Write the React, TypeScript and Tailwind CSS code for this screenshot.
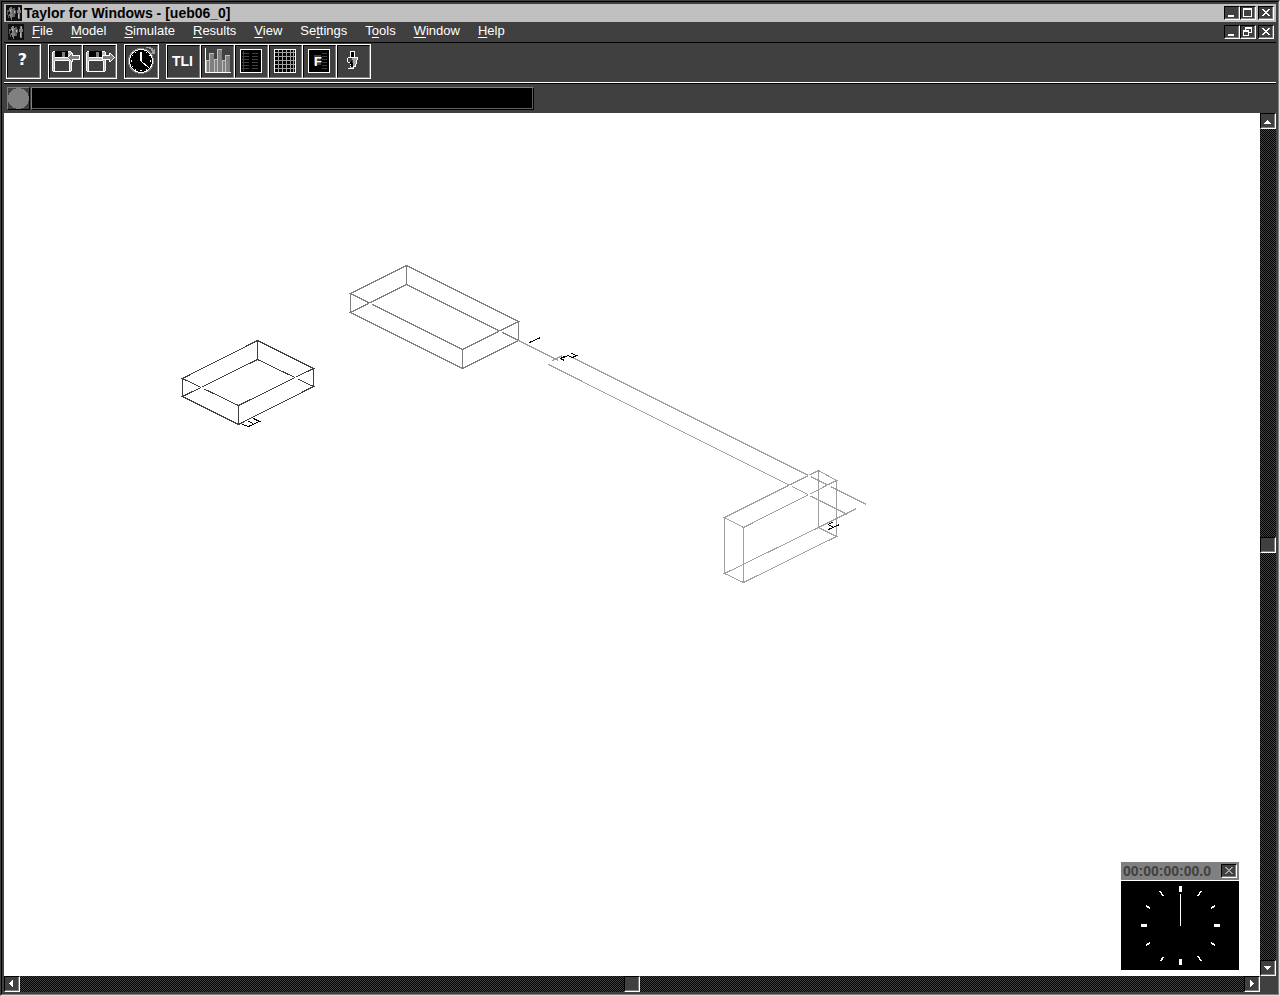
import type { ReactNode } from "react";

const DARK = "#404040";
const MID = "#808080";

const raised =
  "border-t border-l border-t-black border-l-black border-r border-b border-r-white border-b-white";

function AppIcon() {
  return (
    <svg width="16" height="16" viewBox="0 0 16 16" shapeRendering="crispEdges" aria-hidden="true" className="shrink-0">
      <rect width="16" height="16" fill="#101010" />
      <path d="M4 2h2v2h1v3h-1v2h1v3h-1v3h-1v-2h-1v-2h-1v-2h1v-3h-1v-3h1z" fill={MID} />
      <path d="M1 5h2v2h-1v3h-1zM7 3h2v2h1v4h-1v3h-2v-3h-1v-4h1zM2 10h1v3h-1z" fill="#606060" />
      <path d="M4 5h1v2h-1zM8 6h1v2h-1z" fill="#c0c0c0" />
      <path d="M12 2h2v3h1v3h-1v6h-2v-6h-1v-3h1z" fill={MID} />
      <path d="M13 3h1v2h-1zM12 9h1v4h-1z" fill="#c0c0c0" />
    </svg>
  );
}

type Glyph = "min" | "max" | "restore" | "close";

function WindowButton({ glyph, label, muted }: { glyph: Glyph; label: string; muted?: boolean }) {
  const color = muted ? "#a0a0a0" : "#fff";
  return (
    <button type="button" aria-label={label} className={`h-3.5 w-4 shrink-0 bg-[#404040] ${raised}`}>
      <span className="block h-3 w-3.5 border-r border-b border-[#808080]">
        <svg width="13" height="11" viewBox="0 0 13 11" shapeRendering="crispEdges" aria-hidden="true">
          {glyph === "min" && <rect x="3" y="8" width="6" height="2" fill={color} />}
          {glyph === "max" && <path d="M2 1h9v9h-9zM3 3v6h7v-6z" fill={color} fillRule="evenodd" />}
          {glyph === "restore" && (
            <path
              d="M4 1h7v6h-3v3h-6v-6h2zM5 3v1h3v2h2v-3zM3 6v3h4v-3z"
              fill={color}
              fillRule="evenodd"
            />
          )}
          {glyph === "close" && (
            <path
              d="M3 2h2v1h1v1h2v-1h1v-1h2v1h-1v1h-1v1h-1v1h1v1h1v1h1v1h-2v-1h-1v-1h-2v1h-1v1h-2v-1h1v-1h1v-1h1v-1h-1v-1h-1v-1h-1z"
              fill={color}
            />
          )}
        </svg>
      </span>
    </button>
  );
}

function ToolButton({ label, children }: { label: string; children: ReactNode }) {
  return (
    <button
      type="button"
      aria-label={label}
      className="-ml-px size-[35px] shrink-0 border border-white bg-[#404040] text-white first:ml-0"
    >
      <span className="flex size-[33px] items-center justify-center border border-t-black border-r-[#808080] border-b-[#808080] border-l-black">
        {children}
      </span>
    </button>
  );
}

function ToolSvg({ children }: { children: ReactNode }) {
  return (
    <svg width="31" height="31" viewBox="2 2 31 31" shapeRendering="crispEdges" aria-hidden="true">
      {children}
    </svg>
  );
}

function Floppy() {
  return (
    <>
      <path d="M5 7h18v1h1v19h-1v1h-18v-1h-1v-19h1z" fill="#fff" />
      <path d="M5 8h18v19h-18z" fill="#c0c0c0" />
      <rect x="7" y="7" width="13" height="6" fill="#000" />
      <rect x="14" y="8" width="3" height="5" fill={MID} />
      <path d="M7 13h13v1h-13zM7 16h14v1h-14z" fill="#fff" />
      <rect x="7" y="17" width="14" height="10" fill={DARK} />
      <path d="M6 17h1v10h-1zM21 17h1v10h-1z" fill="#fff" />
    </>
  );
}

function OpenIcon() {
  return (
    <ToolSvg>
      <Floppy />
      <path d="M19 13h1v-1h1v-1h1v-1h1v-1h2v2h7v5h-7v2h-2v-1h-1v-1h-1v-1h-1v-1h-1z" fill="#fff" />
      <path d="M20 13h1v-1h1v-1h1v-1h1v2h7v3h-7v2h-1v-1h-1v-1h-1v-1h-1z" fill={MID} />
    </ToolSvg>
  );
}

function SaveIcon() {
  return (
    <ToolSvg>
      <Floppy />
      <path d="M20 11h7v-2h2v1h1v1h1v1h1v1h1v1h-1v1h-1v1h-1v1h-1v1h-2v-2h-7z" fill="#fff" />
      <path d="M21 12h7v-2h1v1h1v1h1v1h1v1h-1v1h-1v1h-1v1h-1v-2h-7z" fill={MID} />
    </ToolSvg>
  );
}

function ClockIcon() {
  return (
    <ToolSvg>
      <circle cx="17" cy="17" r="13" fill={MID} />
      <circle cx="17" cy="17" r="12" fill="#fff" />
      <circle cx="17" cy="17" r="11" fill="#000" />
      <path
        d="M16 8h2v9h-2zM16 26h2v1h-2zM7 16h1v2h-1zM26 16h1v2h-1zM11 8h1v1h-1zM22 8h1v1h-1zM8 11h1v1h-1zM25 11h1v1h-1zM8 22h1v1h-1zM11 25h1v1h-1zM22 25h1v1h-1z"
        fill="#fff"
      />
      <path d="M17 17l8 7" stroke="#fff" fill="none" />
      <path d="M22 3h5v1h2v2h1v-1h1v5h-5v-1h2v-2h-1v-2h-2v-1h-3z" fill="#a0a0a0" />
    </ToolSvg>
  );
}

const bars = [
  [6, 16, 3],
  [9, 9, 5],
  [14, 15, 3],
  [17, 5, 5],
  [22, 16, 3],
  [25, 11, 5],
];

function ChartIcon() {
  return (
    <ToolSvg>
      {bars.map(([x, y, w]) => (
        <g key={x}>
          <rect x={x} y={y} width={w} height={28 - y} fill="#c0c0c0" />
          <rect x={x + 1} y={y + 1} width={w - 1} height={27 - y} fill={MID} />
        </g>
      ))}
      <path d="M5 4h1v24h25v1h-26z" fill="#fff" />
    </ToolSvg>
  );
}

const rows = [9, 12, 15, 18, 21, 24];

function Frame() {
  return (
    <>
      <rect x="6" y="5" width="22" height="24" fill="#fff" />
      <rect x="7" y="6" width="20" height="22" fill="#000" />
    </>
  );
}

function TableIcon() {
  return (
    <ToolSvg>
      <Frame />
      <rect x="9" y="7" width="1" height="20" fill={DARK} />
      {rows.map((y) => (
        <path key={y} d={`M8 ${y}h7v1h-7zM18 ${y}h6v1h-6z`} fill={DARK} />
      ))}
    </ToolSvg>
  );
}

function GridIcon() {
  return (
    <ToolSvg>
      <Frame />
      {[10, 14, 18, 22, 25].map((x) => (
        <rect key={x} x={x} y="6" width="1" height="22" fill="#a0a0a0" />
      ))}
      {[8, 12, 16, 20, 24].map((y) => (
        <rect key={y} x="7" y={y} width="20" height="1" fill="#a0a0a0" />
      ))}
    </ToolSvg>
  );
}

function FormIcon() {
  return (
    <ToolSvg>
      <Frame />
      <rect x="12" y="11" width="7" height="10" fill={DARK} />
      {rows.map((y) => (
        <rect key={y} x="20" y={y} width="5" height="1" fill={DARK} />
      ))}
      <text x="12" y="22" fontSize="13" fontWeight="700" fill="#fff" fontFamily="Liberation Sans, sans-serif">
        F
      </text>
    </ToolSvg>
  );
}

function HandIcon() {
  return (
    <ToolSvg>
      <path d="M14 7h5v6h3v3h-1v4h-1v3h-2v2h-6v-1h2v-2h1v-1h-1v-2h-2v-1h-1v-4h1v-1h2z" fill="#fff" />
      <path d="M15 8h3v5h-3z" fill="#000" />
      <path d="M12 14h4v2h1v5h-2v-2h-1v-1h-2z" fill={DARK} />
      <path d="M16 14h5v2h-1v4h-1v2h-2v2h-3v-1h2v-2h1v-5h-1z" fill="#a0a0a0" />
      <path d="M15 17h1v2h1v4h-2v-3h-1v-2h1z" fill="#000" />
    </ToolSvg>
  );
}

const menus = [
  ["", "F", "ile"],
  ["", "M", "odel"],
  ["", "S", "imulate"],
  ["", "R", "esults"],
  ["", "V", "iew"],
  ["Se", "t", "tings"],
  ["T", "o", "ols"],
  ["", "W", "indow"],
  ["", "H", "elp"],
];

const arrows = {
  up: "M6 6h1v1h1v1h1v1h1v1h-7v-1h1v-1h1v-1h1z",
  down: "M3 5h7v1h-1v1h-1v1h-1v1h-1v-1h-1v-1h-1v-1h-1z",
  left: "M8 3v7h-1v-1h-1v-1h-1v-1h-1v-1h1v-1h1v-1h1v-1z",
  right: "M5 3v7h1v-1h1v-1h1v-1h1v-1h-1v-1h-1v-1h-1v-1z",
};

function ScrollButton({ dir }: { dir: keyof typeof arrows }) {
  return (
    <button type="button" aria-label={`Scroll ${dir}`} className={`size-4 shrink-0 bg-[#404040] ${raised}`}>
      <span className="block size-3.5 border-r border-b border-[#808080]">
        <svg width="13" height="13" viewBox="0 0 13 13" shapeRendering="crispEdges" aria-hidden="true">
          <path d={arrows[dir]} fill="#fff" />
        </svg>
      </span>
    </button>
  );
}

function Scrollbar({ vertical }: { vertical?: boolean }) {
  return (
    <div
      role="scrollbar"
      aria-orientation={vertical ? "vertical" : "horizontal"}
      aria-controls="model"
      aria-valuenow={50}
      className={`flex shrink-0 items-center justify-between bg-[repeating-conic-gradient(#000_0_25%,#404040_0_50%)] bg-[length:2px_2px] ${
        vertical ? "w-4 flex-col" : "h-4 flex-1"
      }`}
    >
      <ScrollButton dir={vertical ? "up" : "left"} />
      <div className={`size-4 bg-[#404040] ${raised}`}>
        <div className="size-3.5 border-r border-b border-[#808080]" />
      </div>
      <ScrollButton dir={vertical ? "down" : "right"} />
    </div>
  );
}

function ModelDrawing() {
  return (
    <svg className="absolute inset-0 size-full" shapeRendering="crispEdges" fill="none" role="img" aria-label="Model">
      <g transform="translate(-3.5 -112.5)">
        <path
          stroke={DARK}
          d="M182 378L257 340L313 368L238 405ZM182 396L257 359L313 386L238 424ZM182 378V396M257 340V359M313 368V386M238 405V424"
        />
        <path
          stroke={MID}
          d="M350 293L406 265L518 321L462 349ZM350 312L406 284L518 340L462 368ZM350 293V312M406 265V284M518 321V340M462 349V368"
        />
        <path
          stroke="#a0a0a0"
          d="M724 517L818 470L836 480L743 527ZM724 573L818 527L836 536L743 582ZM724 517V573M818 470V527M836 480V536M743 527V582"
        />
        <path
          stroke="#a0a0a0"
          d="M518 340L558 360M552 360L562 355M570 356L866 504M548 364L847 514M818 527L856 508"
        />
        <path stroke="#fff" strokeWidth="2" d="M200 387h3M294 377h3M368 303h3M498 331h3M807 475h3M788 485h3M807 494h3M826 485h4" />
        <path stroke="#000" d="M529 342L540 337" />
        <path stroke="#000" d="M565 355L560 358L564 360M560 358L568 355M567 355L572 357L576 355L571 353" />
        <path stroke="#000" d="M242 424L248 426L259 421L253 418M248 421L253 423" />
        <path stroke="#000" d="M833 521L828 524L833 527M839 524L828 529" />
      </g>
    </svg>
  );
}

function ClockWindow() {
  return (
    <section aria-label="Clock" className="absolute right-[21px] bottom-1.5 w-[118px]">
      <header className="flex h-[18px] items-center justify-between bg-[#808080] pr-0.5 pl-0.5">
        <span className="text-sm leading-4 font-bold text-[#404040]">00:00:00:00.0</span>
        <WindowButton glyph="close" label="Close clock" muted />
      </header>
      <svg
        className="mt-px block w-full bg-black"
        viewBox="0 0 118 89"
        shapeRendering="crispEdges"
        stroke="#fff"
        aria-hidden="true"
      >
        <path strokeWidth="3" d="M59.5 5v6M59.5 78v6M20 44.500h6M93 44.500h6" />
        <path d="M59.500 13v32" />
        <path
          strokeWidth="1.4"
          d="M39 10l3 5M80 10l-3 5M25 25l4 2M94 25l-4 2M25 64l4 -2M94 64l-4 -2M40 80l2 -4M80 80l-3 -5"
        />
      </svg>
    </section>
  );
}

export default function App() {
  return (
    <div className="flex min-h-screen flex-col border border-t-[#404040] border-r-[#e0e0e0] border-b-[#e0e0e0] border-l-[#404040] bg-[#404040] font-['Liberation_Sans',sans-serif]">
      <div className="flex flex-1 flex-col border border-t-black border-r-[#808080] border-b-[#808080] border-l-black p-0.5">
        <header className="flex h-[18px] items-center bg-[#c0c0c0] pr-0.5 pl-0.5">
          <AppIcon />
          <h1 className="ml-0.5 flex-1 text-sm leading-4 font-bold whitespace-nowrap text-black">
            Taylor for Windows - [ueb06_0]
          </h1>
          <WindowButton glyph="min" label="Minimize" />
          <WindowButton glyph="max" label="Maximize" />
          <span className="w-0.5" />
          <WindowButton glyph="close" label="Close" />
        </header>

        <nav aria-label="Menu" className="flex h-5 items-center pr-0.5 pl-1">
          <AppIcon />
          <div className="ml-2 flex flex-1 gap-[18px] pb-0.5">
            {menus.map(([before, key, after]) => (
              <button key={before + key + after} type="button" className="text-[13px] leading-4 text-white">
                {before}
                <span className="underline underline-offset-2">{key}</span>
                {after}
              </button>
            ))}
          </div>
          <WindowButton glyph="min" label="Minimize model" />
          <WindowButton glyph="restore" label="Restore model" />
          <span className="w-0.5" />
          <WindowButton glyph="close" label="Close model" />
        </nav>

        <div
          role="toolbar"
          aria-label="Tools"
          className="flex h-10 items-start gap-[7px] border-t border-black pt-px pl-0.5"
        >
          <div className="flex">
            <ToolButton label="Help">
              <span className="pr-0.5 pb-1 font-['DejaVu_Sans',sans-serif] text-base leading-4 font-bold">?</span>
            </ToolButton>
          </div>
          <div className="flex">
            <ToolButton label="Open model">
              <OpenIcon />
            </ToolButton>
            <ToolButton label="Save model">
              <SaveIcon />
            </ToolButton>
          </div>
          <div className="flex">
            <ToolButton label="Run clock">
              <ClockIcon />
            </ToolButton>
          </div>
          <div className="flex">
            <ToolButton label="TLI">
              <span className="pr-0.5 pb-0.5 text-sm leading-4 font-bold">TLI</span>
            </ToolButton>
            <ToolButton label="Chart">
              <ChartIcon />
            </ToolButton>
            <ToolButton label="Table">
              <TableIcon />
            </ToolButton>
            <ToolButton label="Grid">
              <GridIcon />
            </ToolButton>
            <ToolButton label="Form">
              <FormIcon />
            </ToolButton>
            <ToolButton label="Pick">
              <HandIcon />
            </ToolButton>
          </div>
        </div>

        <div className="border-t border-b border-t-white border-b-black" />

        <div className="flex h-[29px] items-start gap-px pt-[3px] pl-[3px]">
          <div className="size-[23px] border border-t-[#808080] border-r-black border-b-black border-l-[#808080]">
            <svg width="21" height="21" viewBox="0 0 21 21" shapeRendering="crispEdges" aria-hidden="true">
              <circle cx="10.5" cy="10.5" r="10.5" fill={MID} />
            </svg>
          </div>
          <div
            role="status"
            aria-label="Status"
            className="h-[23px] w-[503px] border border-t-[#808080] border-r-black border-b-black border-l-[#808080] bg-black"
          >
            <div className="h-[21px] border-r border-b border-[#606060]" />
          </div>
        </div>

        <div className="flex flex-1">
          <main id="model" className="relative min-h-96 flex-1 overflow-hidden bg-white">
            <ModelDrawing />
            <ClockWindow />
          </main>
          <Scrollbar vertical />
        </div>
        <div className="flex pr-4">
          <Scrollbar />
        </div>
      </div>
    </div>
  );
}
